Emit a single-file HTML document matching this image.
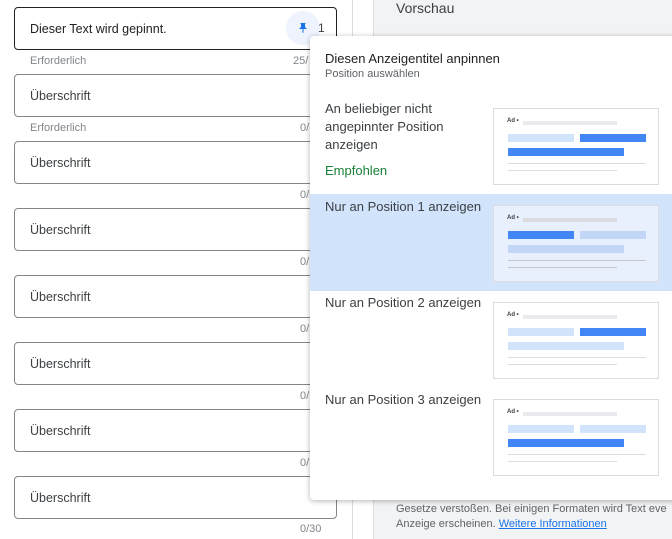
<!DOCTYPE html>
<html><head><meta charset="utf-8"><style>
*{box-sizing:border-box;margin:0;padding:0}
body{width:672px;height:539px;overflow:hidden;background:#fff;font-family:"Liberation Sans",Roboto,sans-serif;position:relative}
.a{position:absolute}
.inp{position:absolute;left:14px;width:323px;height:43px;border:1px solid #80868b;border-radius:4px;font-size:12.5px;color:#3c4043;padding:14px 0 0 15px}
.lbl{position:absolute;font-size:11px;color:#80868b}
.pop{position:absolute;left:310px;top:36px;width:370px;height:464px;background:#fff;border-radius:4px;box-shadow:0 1px 6px rgba(0,0,0,.3)}
.opt{position:absolute;left:15px;font-size:13px;color:#3c4043;line-height:18px}
.th{position:absolute;left:183px;width:166px;height:77px;border:1.5px solid #dadce0;background:#fff}
.th div{position:absolute}
.ad{left:13px;top:9px;font-size:6px;font-weight:bold;color:#3c4043}
</style></head><body>
<div class="a" style="left:352px;top:0;width:1px;height:539px;background:#dadce0"></div>
<div class="a" style="left:373px;top:0;width:299px;height:539px;background:#f1f3f4;border-left:1px solid #dadce0"></div>
<div class="a" style="left:396px;top:0;font-size:14px;color:#3c4043">Vorschau</div>
<div class="a" style="left:396px;top:502px;font-size:11px;color:#5f6368;line-height:15px;white-space:nowrap">Gesetze verstoßen. Bei einigen Formaten wird Text eve<br>Anzeige erscheinen. <span style="color:#1a73e8;text-decoration:underline">Weitere Informationen</span></div>

<div class="inp" style="top:7px;border-color:#202124;color:#202124">Dieser Text wird gepinnt.</div>
<div class="a" style="left:286px;top:11px;width:34px;height:34px;border-radius:50%;background:#eef3fd"></div>
<svg class="a" style="left:297px;top:22px" width="12" height="12" viewBox="0 0 24 24"><path fill="#1a73e8" d="M16 9V4h1V2H7v2h1v5c0 1.66-1.34 3-3 3v2h5.97v7l1 1 1-1v-7H19v-2c-1.66 0-3-1.34-3-3z"/></svg>
<div class="a" style="left:318px;top:21px;font-size:12px;color:#3c4043">1</div>
<div class="lbl" style="left:30px;top:55px">Erforderlich</div><div class="lbl" style="left:293px;top:55px">25/</div>
<div class="inp" style="top:74px">Überschrift</div>
<div class="lbl" style="left:30px;top:122px">Erforderlich</div><div class="lbl" style="left:300px;top:122px">0/</div>
<div class="inp" style="top:141px">Überschrift</div><div class="lbl" style="left:300px;top:189px">0/</div>
<div class="inp" style="top:208px">Überschrift</div><div class="lbl" style="left:300px;top:256px">0/</div>
<div class="inp" style="top:275px">Überschrift</div><div class="lbl" style="left:300px;top:323px">0/</div>
<div class="inp" style="top:342px">Überschrift</div><div class="lbl" style="left:300px;top:390px">0/</div>
<div class="inp" style="top:409px">Überschrift</div><div class="lbl" style="left:300px;top:457px">0/</div>
<div class="inp" style="top:476px">Überschrift</div><div class="lbl" style="left:300px;top:523px">0/30</div>

<div class="pop">
<div class="a" style="left:15px;top:15px;font-size:13px;color:#202124">Diesen Anzeigentitel anpinnen</div>
<div class="a" style="left:15px;top:32px;font-size:11px;color:#5f6368">Position auswählen</div>
<div class="opt" style="top:64px">An beliebiger nicht<br>angepinnter Position<br>anzeigen</div>
<div class="opt" style="top:126px;color:#188038">Empfohlen</div>
<div class="th" style="top:72px"><div class="ad">Ad •</div><div style="left:29px;top:12px;width:94px;height:4px;background:#e8eaed"></div><div style="left:14px;top:25px;width:66px;height:8px;background:#d2e3fc"></div><div style="left:86px;top:25px;width:66px;height:8px;background:#4285f4"></div><div style="left:14px;top:39px;width:116px;height:8px;background:#4285f4"></div><div style="left:14px;top:54px;width:138px;height:1px;background:#dadce0"></div><div style="left:14px;top:61px;width:109px;height:1px;background:#dadce0"></div></div>
<div class="a" style="left:0;top:158px;width:362px;height:97px;background:#d2e3fc"></div>
<div class="opt" style="top:162px">Nur an Position 1 anzeigen</div>
<div class="th" style="top:169px;background:#e8f0fe"><div class="ad">Ad •</div><div style="left:29px;top:12px;width:94px;height:4px;background:#dadce0"></div><div style="left:14px;top:25px;width:66px;height:8px;background:#4285f4"></div><div style="left:86px;top:25px;width:66px;height:8px;background:#c2d7f8"></div><div style="left:14px;top:39px;width:116px;height:8px;background:#c2d7f8"></div><div style="left:14px;top:54px;width:138px;height:1px;background:#c4c7cc"></div><div style="left:14px;top:61px;width:109px;height:1px;background:#c4c7cc"></div></div>
<div class="opt" style="top:258px">Nur an Position 2 anzeigen</div>
<div class="th" style="top:266px"><div class="ad">Ad •</div><div style="left:29px;top:12px;width:94px;height:4px;background:#e8eaed"></div><div style="left:14px;top:25px;width:66px;height:8px;background:#d2e3fc"></div><div style="left:86px;top:25px;width:66px;height:8px;background:#4285f4"></div><div style="left:14px;top:39px;width:116px;height:8px;background:#d2e3fc"></div><div style="left:14px;top:54px;width:138px;height:1px;background:#dadce0"></div><div style="left:14px;top:61px;width:109px;height:1px;background:#dadce0"></div></div>
<div class="opt" style="top:355px">Nur an Position 3 anzeigen</div>
<div class="th" style="top:363px"><div class="ad">Ad •</div><div style="left:29px;top:12px;width:94px;height:4px;background:#e8eaed"></div><div style="left:14px;top:25px;width:66px;height:8px;background:#d2e3fc"></div><div style="left:86px;top:25px;width:66px;height:8px;background:#d2e3fc"></div><div style="left:14px;top:39px;width:116px;height:8px;background:#4285f4"></div><div style="left:14px;top:54px;width:138px;height:1px;background:#dadce0"></div><div style="left:14px;top:61px;width:109px;height:1px;background:#dadce0"></div></div>
</div>
</body></html>
